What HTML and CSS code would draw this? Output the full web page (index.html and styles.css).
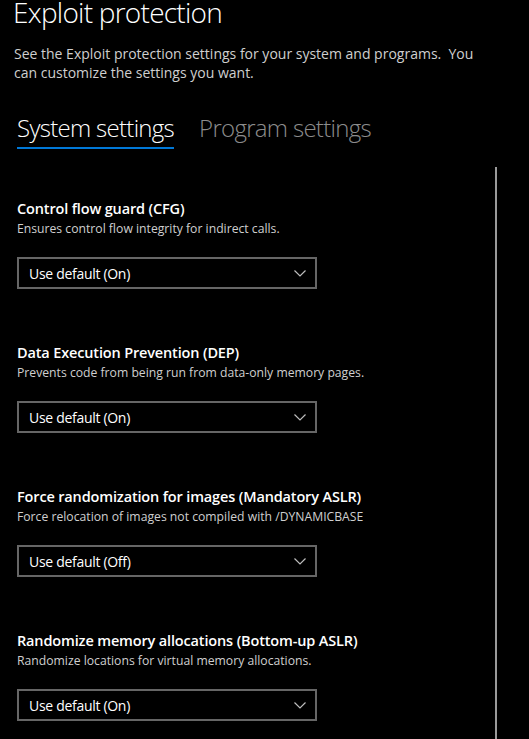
FILE: index.html
```html
<!DOCTYPE html>
<html lang="en">
<head>
<meta charset="utf-8">
<title>Exploit protection</title>
<link rel="stylesheet" href="styles.css">
</head>
<body>
<main class="page">
  <h1 class="title">Exploit protection</h1>
  <p class="intro">See the Exploit protection settings for your system and programs.&nbsp; You<br>can customize the settings you want.</p>
  <nav class="tabs">
    <span class="tab active">System settings</span>
    <span class="tab">Program settings</span>
  </nav>
  <div class="content">
    <div class="settings">
      <section class="setting">
        <h2 class="setting-title">Control flow guard (CFG)</h2>
        <p class="setting-desc">Ensures control flow integrity for indirect calls.</p>
        <div class="dropdown"><span>Use default (On)</span><svg class="chev" width="12" height="7" viewBox="0 0 12 7"><path d="M0.5 0.5 L6 6 L11.5 0.5" fill="none" stroke="#bdbdbd" stroke-width="1.2"/></svg></div>
      </section>
      <section class="setting">
        <h2 class="setting-title">Data Execution Prevention (DEP)</h2>
        <p class="setting-desc">Prevents code from being run from data-only memory pages.</p>
        <div class="dropdown"><span>Use default (On)</span><svg class="chev" width="12" height="7" viewBox="0 0 12 7"><path d="M0.5 0.5 L6 6 L11.5 0.5" fill="none" stroke="#bdbdbd" stroke-width="1.2"/></svg></div>
      </section>
      <section class="setting">
        <h2 class="setting-title">Force randomization for images (Mandatory ASLR)</h2>
        <p class="setting-desc">Force relocation of images not compiled with /DYNAMICBASE</p>
        <div class="dropdown"><span>Use default (Off)</span><svg class="chev" width="12" height="7" viewBox="0 0 12 7"><path d="M0.5 0.5 L6 6 L11.5 0.5" fill="none" stroke="#bdbdbd" stroke-width="1.2"/></svg></div>
      </section>
      <section class="setting">
        <h2 class="setting-title">Randomize memory allocations (Bottom-up ASLR)</h2>
        <p class="setting-desc">Randomize locations for virtual memory allocations.</p>
        <div class="dropdown"><span>Use default (On)</span><svg class="chev" width="12" height="7" viewBox="0 0 12 7"><path d="M0.5 0.5 L6 6 L11.5 0.5" fill="none" stroke="#bdbdbd" stroke-width="1.2"/></svg></div>
      </section>
    </div>
    <div class="scrollbar"></div>
  </div>
</main>
</body>
</html>
```
FILE: styles.css
```css
html, body {
  margin: 0;
  padding: 0;
  background: #000;
  height: 100%;
  overflow: hidden;
}
body {
  font-family: "Open Sans", "Noto Sans", "Liberation Sans", sans-serif;
  color: #fff;
}
.page {
  padding-left: 13px;
  display: flex;
  flex-direction: column;
  height: 100%;
}
.title {
  margin: -5px 0 0 0;
  font-size: 28px;
  line-height: 34px;
  font-weight: 300;
  letter-spacing: -0.75px;
}
.intro {
  margin: 15px 0 0 1px;
  font-size: 14px;
  line-height: 19px;
  color: #cfcfcf;
  letter-spacing: 0;
}
.tabs {
  margin: 31px 0 0 4px;
  display: flex;
  gap: 25px;
}
.tab {
  font-size: 24px;
  line-height: 30px;
  font-weight: 300;
  color: #8c8c8c;
  padding-bottom: 4px;
  border-bottom: 2px solid transparent;
  letter-spacing: -0.7px;
}
.tab.active {
  color: #fff;
  border-bottom-color: #0078d7;
}
.content {
  margin-top: 18px;
  flex: 1;
  display: flex;
}
.settings {
  width: 478px;
  padding: 32px 0 0 4px;
  display: flex;
  flex-direction: column;
  gap: 54px;
}
.setting {
  display: flex;
  flex-direction: column;
}
.setting-title {
  margin: 0;
  font-size: 14.5px;
  line-height: 20px;
  font-weight: 600;
  letter-spacing: -0.15px;
}
.setting-desc {
  margin: 2px 0 0 0;
  font-size: 12.2px;
  line-height: 16px;
  color: #cfcfcf;
  letter-spacing: 0;
}
.dropdown {
  margin-top: 20px;
  box-sizing: border-box;
  width: 300px;
  height: 32px;
  border: 2px solid #666;
  display: flex;
  align-items: center;
  justify-content: space-between;
  padding: 0 9px 0 10px;
  font-size: 14px;
  letter-spacing: -0.3px;
}
.chev {
  display: block;
}
.scrollbar {
  width: 2px;
  background: #9a9a9a;
}
```
